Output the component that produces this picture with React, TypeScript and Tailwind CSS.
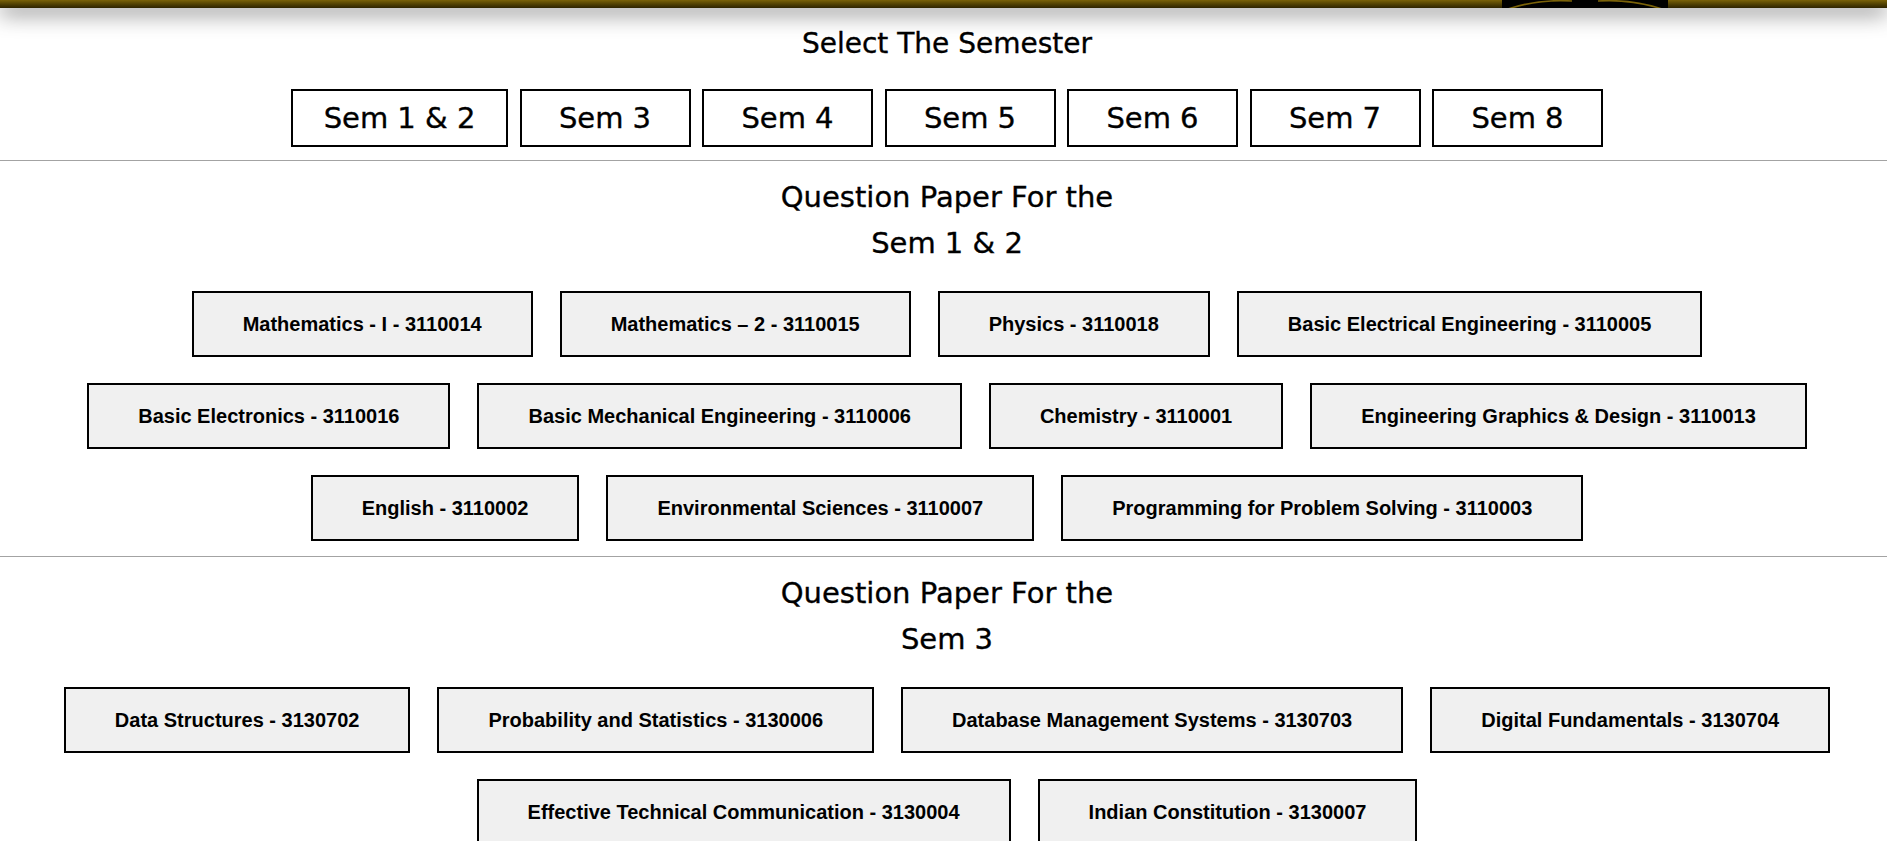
import React from "react";

const semesters = ["Sem 1 & 2", "Sem 3", "Sem 4", "Sem 5", "Sem 6", "Sem 7", "Sem 8"];

const sections: { title: string; subjects: string[] }[] = [
  {
    title: "Sem 1 & 2",
    subjects: [
      "Mathematics - I - 3110014",
      "Mathematics – 2 - 3110015",
      "Physics - 3110018",
      "Basic Electrical Engineering - 3110005",
      "Basic Electronics - 3110016",
      "Basic Mechanical Engineering - 3110006",
      "Chemistry - 3110001",
      "Engineering Graphics & Design - 3110013",
      "English - 3110002",
      "Environmental Sciences - 3110007",
      "Programming for Problem Solving - 3110003",
    ],
  },
  {
    title: "Sem 3",
    subjects: [
      "Data Structures - 3130702",
      "Probability and Statistics - 3130006",
      "Database Management Systems - 3130703",
      "Digital Fundamentals - 3130704",
      "Effective Technical Communication - 3130004",
      "Indian Constitution - 3130007",
    ],
  },
];

function TopBar() {
  return (
    <div className="relative z-10 h-[8px] bg-linear-to-b from-[#7a6208] to-[#2e2400] shadow-[0_4px_22px_rgba(0,0,0,0.75)]">
      <div className="absolute left-[1502px] top-0 h-[8px] w-[166px] bg-black">
        <svg width="166" height="8" viewBox="0 0 166 8" className="block">
          <path d="M6 9 Q 36 -1 70 1" fill="none" stroke="#7a6208" strokeWidth="1.6" />
          <path d="M96 1 Q 130 -1 160 9" fill="none" stroke="#7a6208" strokeWidth="1.6" />
        </svg>
      </div>
    </div>
  );
}

export default function App() {
  return (
    <div className="min-h-screen overflow-hidden bg-white text-black">
      <TopBar />
      <div className="pl-[7px] pt-[19px] pb-[13px] font-['DejaVu_Sans',sans-serif] [-webkit-text-stroke:0.35px_black]">
        <h1 className="text-center text-[28px] leading-[34px] font-normal">Select The Semester</h1>
        <div className="mt-[28px] flex justify-center gap-[11.5px]">
          {semesters.map((s, i) => (
            <button
              key={s}
              className={
                (i === 0 ? "w-[217px] " : "w-[171px] ") +
                "h-[58px] flex items-center justify-center border-2 border-black bg-white text-[29px] leading-[40px] text-black"
              }
            >
              {s}
            </button>
          ))}
        </div>
      </div>
      {sections.map((sec) => (
        <div key={sec.title} className="border-t border-[#a3a3a3]">
          <div className="pl-[7px] pt-[13px] pb-[15px]">
            <h2 className="text-center font-['DejaVu_Sans',sans-serif] text-[29px] leading-[46px] font-normal [-webkit-text-stroke:0.35px_black]">
              <span className="block">Question Paper For the</span>
              <span className="block">{sec.title}</span>
            </h2>
            <div className="mt-[25px] flex flex-wrap justify-center gap-x-[27px] gap-y-[26px]">
              {sec.subjects.map((sub) => (
                <button
                  key={sub}
                  className="border-2 border-black bg-[#f0f0f0] px-[49px] py-[19px] font-['Liberation_Sans',Arial,sans-serif] text-[20px] leading-[24px] font-bold text-black"
                >
                  {sub}
                </button>
              ))}
            </div>
          </div>
        </div>
      ))}
    </div>
  );
}
